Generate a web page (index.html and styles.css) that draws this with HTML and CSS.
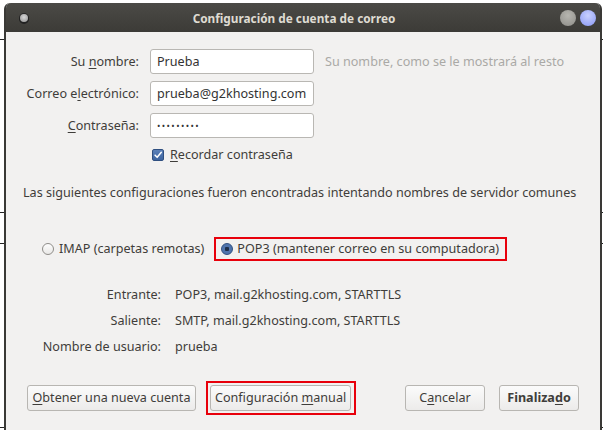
FILE: index.html
```html
<!DOCTYPE html>
<html lang="es">
<head>
<meta charset="utf-8">
<title>Configuración de cuenta de correo</title>
<link rel="stylesheet" href="styles.css">
</head>
<body>
<div class="window">
  <div class="titlebar">
    <span class="menu-dot"></span>
    <span class="title">Configuración de cuenta de correo</span>
    <span class="controls">
      <span class="ctl ctl-grey"></span>
      <span class="ctl ctl-blue"></span>
    </span>
  </div>
  <div class="content">
    <div class="form">
      <label class="lbl">Su <u>n</u>ombre:</label>
      <div class="input">Prueba</div>
      <div class="hint">Su nombre, como se le mostrará al resto</div>

      <label class="lbl">Correo e<u>l</u>ectrónico:</label>
      <div class="input">prueba@g2khosting.com</div>
      <div></div>

      <label class="lbl"><u>C</u>ontraseña:</label>
      <div class="input"><span class="dots">•••••••••</span></div>
      <div></div>

      <div></div>
      <div class="check-row">
        <span class="checkbox">
          <svg viewBox="0 0 12 12" width="12" height="12"><path d="M2.5 6.2 L5 8.8 L10 2.8" fill="none" stroke="#fff" stroke-width="1.8" stroke-linecap="round" stroke-linejoin="round"/></svg>
        </span>
        <span><u>R</u>ecordar contraseña</span>
      </div>
      <div></div>
    </div>

    <p class="note">Las siguientes configuraciones fueron encontradas intentando nombres de servidor comunes</p>

    <div class="radios">
      <div class="radio-opt">
        <span class="radio"></span>
        <span>IMAP (carpetas remotas)</span>
      </div>
      <div class="radio-opt highlight">
        <span class="radio checked"></span>
        <span>POP3 (mantener correo en su computadora)</span>
      </div>
    </div>

    <div class="info">
      <span class="info-lbl">Entrante:</span>
      <span>POP3, mail.g2khosting.com, STARTTLS</span>
      <span class="info-lbl">Saliente:</span>
      <span>SMTP, mail.g2khosting.com, STARTTLS</span>
      <span class="info-lbl">Nombre de usuario:</span>
      <span>prueba</span>
    </div>

    <div class="buttons">
      <button class="btn btn-new"><u>O</u>btener una nueva cuenta</button>
      <div class="highlight btn-box">
        <button class="btn btn-manual">Configuración <u>m</u>anual</button>
      </div>
      <button class="btn btn-cancel">C<u>a</u>ncelar</button>
      <button class="btn btn-done">Finaliza<u>d</u>o</button>
    </div>
  </div>
</div>
</body>
</html>
```

FILE: styles.css
```css
html, body {
  margin: 0;
  padding: 0;
}
body {
  width: 603px;
  height: 430px;
  overflow: hidden;
  background-color: #ffffff;
  background-image:
    linear-gradient(#222, #222),
    linear-gradient(#222, #222),
    linear-gradient(#222, #222),
    linear-gradient(#222, #222);
  background-size: 603px 1px;
  background-position: 0 39px, 0 212px, 0 243px, 0 427px;
  background-repeat: no-repeat;
  font-family: "Noto Sans", "Open Sans", sans-serif;
  font-size: 12.6px;
  line-height: 16px;
  color: #3f3d3a;
  padding-top: 3px;
  box-sizing: border-box;
}
u { text-decoration: underline; text-underline-offset: 2px; }

.window {
  margin-left: 4px;
  width: 598px;
  height: 440px;
  background: #f2f1f0;
  border-left: 2px solid #3a3936;
  border-right: 2px solid #3a3936;
  border-radius: 6px 6px 0 0;
  box-sizing: border-box;
  display: flex;
  flex-direction: column;
}

.titlebar {
  height: 29px;
  flex: none;
  background: linear-gradient(#4b4a46, #3c3b37);
  border-radius: 5px 5px 0 0;
  display: flex;
  align-items: center;
  padding: 0 4px 0 9px;
}
.menu-dot {
  width: 8px;
  height: 8px;
  border-radius: 50%;
  background: radial-gradient(circle at 50% 40%, #d8d8d8, #8f8f8f);
  box-shadow: 0 1px 0 1px #222, 0 0 0 1px #2a2a2a;
  margin-left: 5px;
}
.title {
  flex: 1;
  text-align: center;
  color: #dfdbd2;
  font-weight: bold;
  font-size: 11.8px;
}
.controls {
  display: flex;
  gap: 4px;
  align-items: center;
}
.ctl {
  width: 16px;
  height: 16px;
  border-radius: 50%;
}
.ctl-grey {
  background: radial-gradient(circle at 50% 35%, #b7b6b0, #8e8d88);
}
.ctl-blue {
  background: radial-gradient(circle at 50% 35%, #c8d0ff, #8a98f4);
}

.content {
  flex: 1;
  padding: 17px 21px 0 20px;
}

.form {
  display: grid;
  grid-template-columns: 113px 164px auto;
  grid-template-rows: 25px 25px 25px 16px;
  column-gap: 11px;
  row-gap: 7px;
  align-items: center;
}
.lbl {
  text-align: right;
  white-space: nowrap;
}
.input {
  height: 25px;
  box-sizing: border-box;
  background: #fff;
  border: 1px solid #b9b7b3;
  border-radius: 3px;
  padding: 0 6px;
  display: flex;
  align-items: center;
  color: #333;
  white-space: nowrap;
  overflow: hidden;
}
.dots {
  font-size: 9px;
  letter-spacing: 1.4px;
}
.hint {
  color: #aaa9a6;
  white-space: nowrap;
}
.check-row {
  display: flex;
  align-items: center;
  gap: 6px;
  padding-left: 2px;
  height: 16px;
  margin-top: 4px;
  white-space: nowrap;
}
.checkbox {
  width: 12px;
  height: 12px;
  flex: none;
  box-sizing: border-box;
  border-radius: 2px;
  background: linear-gradient(#5b80b8, #3d64a0);
  border: 1px solid #2f4f80;
  display: flex;
  align-items: center;
  justify-content: center;
}
.checkbox svg { width: 10px; height: 10px; }

.note {
  margin: 24px 0 0 -3px;
  line-height: 16px;
  white-space: nowrap;
}

.radios {
  display: flex;
  align-items: center;
  margin-top: 36px;
  padding-left: 16px;
  gap: 10px;
  height: 24px;
  white-space: nowrap;
}
.radio-opt {
  display: flex;
  align-items: center;
  gap: 5px;
}
.radio {
  width: 12px;
  height: 12px;
  flex: none;
  box-sizing: border-box;
  border-radius: 50%;
  border: 1px solid #8f8d89;
  background: linear-gradient(#fdfdfd, #e9e8e6);
}
.radio.checked {
  border-color: #2f4f80;
  background: radial-gradient(circle, #1e2f4a 0 2px, #4f74ad 2.5px);
}
.highlight {
  border: 2px solid #e8000b;
}
.radio-opt.highlight {
  height: 24px;
  box-sizing: border-box;
  padding: 0 6px 0 5px;
  gap: 4px;
}

.info {
  display: grid;
  grid-template-columns: 120px auto;
  column-gap: 14px;
  grid-auto-rows: 26px;
  align-items: center;
  margin-top: 21px;
  padding-left: 15px;
  white-space: nowrap;
}
.info-lbl { text-align: right; }

.buttons {
  display: flex;
  align-items: center;
  margin-top: 21px;
  padding-left: 1px;
}
.btn {
  font-family: inherit;
  font-size: 12.6px;
  line-height: 16px;
  color: #3f3d3a;
  height: 26px;
  box-sizing: border-box;
  border: 1px solid #b8b6b2;
  border-radius: 3px;
  background: linear-gradient(#fbfbfb, #ecebea);
  padding: 0 4px;
  margin: 0;
  white-space: nowrap;
}
.btn-new { width: 169px; }
.btn-box {
  margin-left: 10px;
  padding: 2px 3px 2px 2px;
  display: flex;
}
.btn-manual { width: 141px; }
.btn-cancel { width: 80px; margin-left: auto; }
.btn-done { width: 80px; margin-left: 14px; font-weight: bold; }
```
